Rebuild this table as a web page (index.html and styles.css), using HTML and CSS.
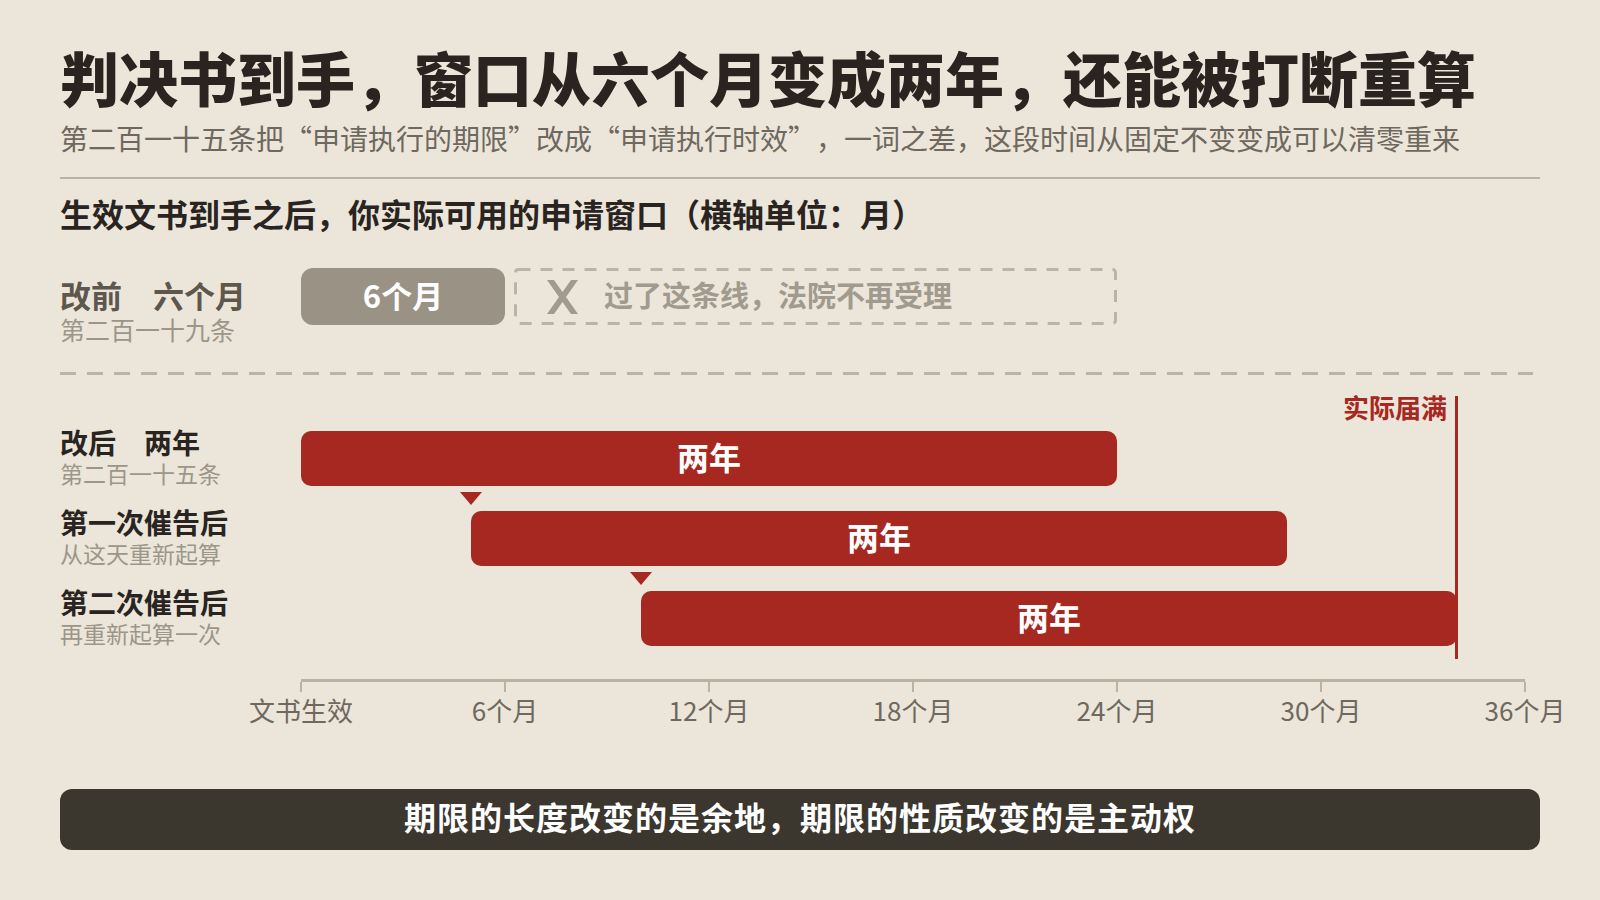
FILE: index.html
```html
<!DOCTYPE html>
<html lang="zh-CN">
<head>
<meta charset="utf-8">
<title>申请执行时效</title>
<link rel="stylesheet" href="styles.css">
</head>
<body>
<div class="page">
  <h1 class="title">判决书到手，窗口从六个月变成两年，还能被打断重算</h1>
  <p class="subtitle">第二百一十五条把“申请执行的期限”改成“申请执行时效”，一词之差，这段时间从固定不变变成可以清零重来</p>
  <div class="rule"></div>
  <h2 class="heading">生效文书到手之后，你实际可用的申请窗口（横轴单位：月）</h2>

  <div class="row row-before">
    <div class="label label-before">
      <div class="label-main muted">改前　六个月</div>
      <div class="label-sub">第二百一十九条</div>
    </div>
    <div class="track">
      <div class="old-bar">6个月</div>
      <div class="void">
        <svg class="void-frame" aria-hidden="true"><rect class="void-rect" x="1.5" y="1.5" rx="3" ry="3"/></svg>
        <svg class="x-icon" viewBox="0 0 31 34" aria-hidden="true">
          <polygon points="0,0 7,0 31,34 24,34"/>
          <polygon points="24,0 31,0 7,34 0,34"/>
        </svg>
        <span class="void-text">过了这条线，法院不再受理</span>
      </div>
    </div>
  </div>

  <div class="dash-sep"></div>

  <div class="chart">
    <div class="marker"><span class="marker-label">实际届满</span></div>

    <div class="row bar-row">
      <div class="label">
        <div class="label-main">改后　两年</div>
        <div class="label-sub">第二百一十五条</div>
      </div>
      <div class="track">
        <div class="bar" style="margin-left: 0%;">两年</div>
      </div>
    </div>

    <div class="row bar-row">
      <div class="label">
        <div class="label-main">第一次催告后</div>
        <div class="label-sub">从这天重新起算</div>
      </div>
      <div class="track">
        <div class="bar restart" style="margin-left: 13.889%;">两年</div>
      </div>
    </div>

    <div class="row bar-row">
      <div class="label">
        <div class="label-main">第二次催告后</div>
        <div class="label-sub">再重新起算一次</div>
      </div>
      <div class="track">
        <div class="bar restart" style="margin-left: 27.778%;">两年</div>
      </div>
    </div>

    <div class="axis-row">
      <div class="axis">
        <div class="tick"><span>文书生效</span></div>
        <div class="tick"><span>6个月</span></div>
        <div class="tick"><span>12个月</span></div>
        <div class="tick"><span>18个月</span></div>
        <div class="tick"><span>24个月</span></div>
        <div class="tick"><span>30个月</span></div>
        <div class="tick"><span>36个月</span></div>
      </div>
    </div>
  </div>

  <div class="takeaway">期限的长度改变的是余地，期限的性质改变的是主动权</div>
</div>
</body>
</html>
```

FILE: styles.css
```css
* {
  box-sizing: border-box;
}

html, body {
  margin: 0;
  padding: 0;
}

body {
  width: 1600px;
  height: 900px;
  overflow: hidden;
  background: #ebe6d9;
  font-family: "Noto Sans CJK SC", "Noto Sans", sans-serif;
  color: #29241f;
  text-spacing-trim: space-all;
}

.page {
  padding: 41px 60px 0 60px;
}

.title {
  margin: 0;
  font-size: 59px;
  line-height: 72px;
  font-weight: 900;
  color: #29241f;
  white-space: nowrap;
}

.subtitle {
  margin: 7px 0 0 0;
  font-size: 28px;
  line-height: 36px;
  font-weight: 400;
  color: #6e685f;
  white-space: nowrap;
}

.rule {
  margin-top: 21px;
  height: 2px;
  background: #b8b2a1;
}

.heading {
  margin: 14px 0 0 0;
  font-size: 32px;
  line-height: 40px;
  font-weight: 700;
  color: #29241f;
  white-space: nowrap;
}

.row {
  display: flex;
  align-items: flex-start;
}

.label {
  width: 241px;
  flex: none;
}

.label-main {
  font-size: 28px;
  line-height: 28px;
  font-weight: 700;
  color: #29241f;
  margin-top: -3px;
  white-space: nowrap;
}

.label-sub {
  margin-top: 4px;
  font-size: 23px;
  line-height: 26px;
  color: #9c968a;
  white-space: nowrap;
}

.row-before {
  margin-top: 35px;
}

.label-before {
  padding-top: 12px;
}

.label-before .label-main {
  font-size: 31px;
  line-height: 30px;
  margin-top: 0;
}

.label-before .label-sub {
  margin-top: 6px;
  font-size: 25px;
}

.muted {
  color: #5d574e;
}

.track {
  width: 1224px;
  flex: none;
  display: flex;
}

.old-bar {
  width: 204px;
  height: 57px;
  padding-bottom: 4px;
  border-radius: 12px;
  background: #9a9285;
  color: #ffffff;
  font-size: 31px;
  font-weight: 700;
  display: flex;
  align-items: center;
  justify-content: center;
}

.void {
  position: relative;
  margin-left: 9px;
  width: 603px;
  height: 57px;
  display: flex;
  align-items: center;
  padding-left: 33px;
  gap: 26px;
}

.void-frame {
  position: absolute;
  left: 0;
  top: 0;
  width: 100%;
  height: 100%;
  overflow: visible;
}

.void-rect {
  width: calc(100% - 3px);
  height: calc(100% - 3px);
  fill: none;
  stroke: #bab4a5;
  stroke-width: 3;
  stroke-dasharray: 12 10;
}

.x-icon {
  width: 31px;
  height: 34px;
  flex: none;
  fill: #a19a8e;
}

.void-text {
  margin-bottom: 6px;
  font-size: 29px;
  font-weight: 700;
  color: #a19a8e;
  white-space: nowrap;
}

.dash-sep {
  margin-top: 30px;
  height: 3px;
  width: 1473px;
  background: repeating-linear-gradient(to right, #bab4a5 0 16px, transparent 16px 27px);
}

.chart {
  position: relative;
  padding-top: 56px;
}

.bar-row + .bar-row {
  margin-top: 25px;
}

.bar {
  position: relative;
  width: 66.667%;
  height: 55px;
  padding-bottom: 6px;
  border-radius: 10px;
  background: #a62821;
  color: #ffffff;
  font-size: 32px;
  font-weight: 700;
  display: flex;
  align-items: center;
  justify-content: center;
}

.bar.restart::before {
  content: "";
  position: absolute;
  left: -11px;
  top: -19px;
  width: 0;
  height: 0;
  border-left: 11px solid transparent;
  border-right: 11px solid transparent;
  border-top: 13px solid #a62821;
}

.marker {
  position: absolute;
  left: 1395px;
  top: 21px;
  width: 3px;
  height: 263px;
  background: #a62821;
  z-index: 2;
}

.marker-label {
  position: absolute;
  right: 11px;
  top: -4px;
  font-size: 26px;
  line-height: 30px;
  font-weight: 700;
  color: #a62821;
  white-space: nowrap;
}

.axis-row {
  display: flex;
  margin-top: 33px;
}

.axis {
  margin-left: 241px;
  width: 1224px;
  border-top: 3px solid #b9b3a3;
  display: flex;
  justify-content: space-between;
}

.tick {
  width: 0;
  display: flex;
  flex-direction: column;
  align-items: center;
}

.tick::before {
  content: "";
  width: 2px;
  height: 10px;
  flex: none;
  background: #b9b3a3;
}

.tick span {
  margin-top: 3px;
  font-size: 26px;
  line-height: 30px;
  color: #6e685f;
  white-space: nowrap;
}

.takeaway {
  margin-top: 64px;
  height: 61px;
  border-radius: 12px;
  background: #3b362e;
  color: #ffffff;
  font-size: 32px;
  line-height: 55px;
  font-weight: 700;
  letter-spacing: 1px;
  text-align: center;
  white-space: nowrap;
}
```
